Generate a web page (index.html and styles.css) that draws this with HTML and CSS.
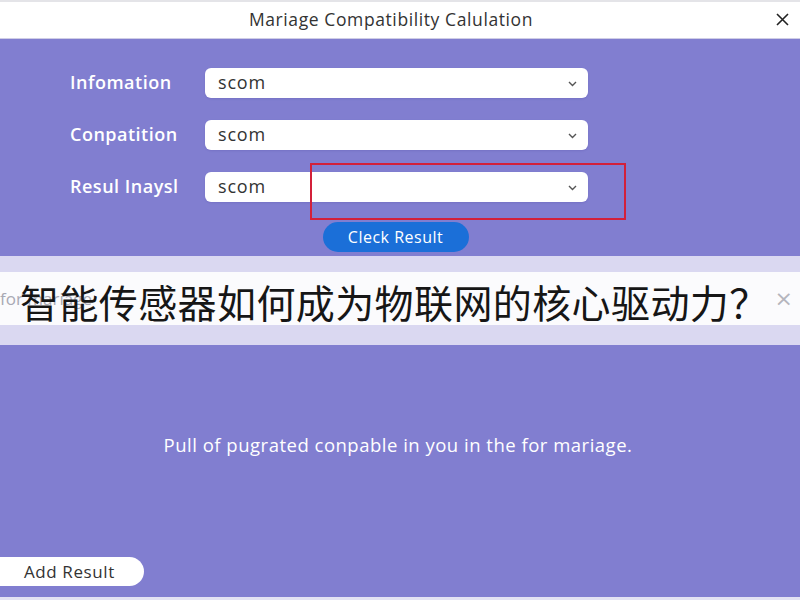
FILE: index.html
```html
<!DOCTYPE html>
<html lang="en">
<head>
    <meta charset="UTF-8">
    <meta name="viewport" content="width=device-width, initial-scale=1.0">
    <title>Mariage Compatibility Calulation</title>
    <link rel="stylesheet" href="styles.css">
</head>
<body>
    <div class="window">
        <!-- 标题栏 -->
        <div class="titlebar">
            <span class="title">Mariage Compatibility Calulation</span>
            <span class="close">
                <svg width="13" height="13" viewBox="0 0 13 13">
                    <path d="M1 1 L12 12 M12 1 L1 12" stroke="#222" stroke-width="1.6" fill="none"/>
                </svg>
            </span>
        </div>

        <div class="panel">
            <div class="form">
                <div class="row">
                    <label class="label">Infomation</label>
                    <div class="select">
                        <span>scom</span>
                        <svg class="chevron" width="9" height="6" viewBox="0 0 9 6"><path d="M1 1 L4.5 4.5 L8 1" stroke="#555" stroke-width="1.4" fill="none"/></svg>
                    </div>
                </div>
                <div class="row">
                    <label class="label">Conpatition</label>
                    <div class="select">
                        <span>scom</span>
                        <svg class="chevron" width="9" height="6" viewBox="0 0 9 6"><path d="M1 1 L4.5 4.5 L8 1" stroke="#555" stroke-width="1.4" fill="none"/></svg>
                    </div>
                </div>
                <div class="row">
                    <label class="label">Resul Inaysl</label>
                    <div class="select">
                        <span>scom</span>
                        <svg class="chevron" width="9" height="6" viewBox="0 0 9 6"><path d="M1 1 L4.5 4.5 L8 1" stroke="#555" stroke-width="1.4" fill="none"/></svg>
                    </div>
                </div>
                <!-- 高亮框 -->
                <div class="highlight"></div>
            </div>

            <div class="actions">
                <button class="btn-check">Cleck Result</button>
            </div>

            <!-- 悬浮提示条 -->
            <div class="banner">
                <div class="banner-line">
                    <span class="banner-under">for mariage</span>
                    <span class="banner-text">智能传感器如何成为物联网的核心驱动力？</span>
                    <span class="banner-close">×</span>
                </div>
            </div>

            <p class="result-text">Pull of pugrated conpable in you in the for mariage.</p>

            <div class="footer-actions">
                <button class="btn-add">Add Result</button>
            </div>
        </div>
        <div class="bottom-strip"></div>
    </div>
</body>
</html>
```

FILE: styles.css
```css
* {
    margin: 0;
    padding: 0;
    box-sizing: border-box;
}

body {
    width: 800px;
    height: 600px;
    overflow: hidden;
    font-family: 'Open Sans', 'Noto Sans', sans-serif;
    background: #fff;
}

.window {
    display: flex;
    flex-direction: column;
    height: 600px;
}

/* 标题栏 */
.titlebar {
    height: 39px;
    flex-shrink: 0;
    background: #fff;
    border-top: 2px solid #e4e4e8;
    border-bottom: 1px solid #cfcde6;
    display: flex;
    align-items: center;
    justify-content: center;
    position: relative;
}

.title {
    font-size: 17.5px;
    letter-spacing: 0.6px;
    color: #333;
    margin-left: -18px;
    margin-top: -2px;
}

.close {
    position: absolute;
    right: 11px;
    top: 11px;
    display: flex;
}

/* 主面板 */
.panel {
    flex: 1;
    background: #817ed0;
    display: flex;
    flex-direction: column;
    padding-bottom: 11px;
}

.form {
    position: relative;
    display: flex;
    flex-direction: column;
    gap: 22px;
    padding-top: 29px;
}

.row {
    display: flex;
    align-items: center;
    height: 30px;
}

.label {
    width: 205px;
    padding-left: 70px;
    font-size: 18px;
    font-weight: 600;
    color: #fff;
    letter-spacing: 0.5px;
    margin-top: -3px;
}

.select {
    width: 383px;
    height: 30px;
    background: #fff;
    border-radius: 6px;
    display: flex;
    align-items: center;
    justify-content: space-between;
    padding: 0 11px 0 13px;
    font-size: 18px;
    letter-spacing: 0.8px;
    color: #333;
    box-shadow: 0 1px 2px rgba(60, 50, 140, 0.15);
}

.select span {
    margin-top: -2px;
}

.chevron {
    margin-top: 1px;
}

.highlight {
    position: absolute;
    left: 310px;
    top: 124px;
    width: 316px;
    height: 57px;
    border: 2px solid #d3203a;
}

.actions {
    display: flex;
    justify-content: center;
    padding-right: 9px;
    margin-top: 20px;
}

.btn-check {
    width: 146px;
    height: 30px;
    border: none;
    border-radius: 15px;
    background: #1b6fd8;
    color: #fff;
    font-family: 'Open Sans', sans-serif;
    font-size: 16px;
    letter-spacing: 0.5px;
}

/* 提示条 */
.banner {
    margin-top: 4px;
    background: #dad8f1;
    padding: 16px 0 20px;
}

.banner-line {
    position: relative;
    height: 53px;
    background: #fbfbfd;
    display: flex;
    align-items: center;
    padding-left: 20px;
}

.banner-under {
    position: absolute;
    left: 0;
    top: 15px;
    font-size: 17px;
    color: #a9a9b4;
}

.banner-text {
    position: relative;
    font-family: 'Noto Sans CJK SC', sans-serif;
    font-size: 39px;
    letter-spacing: 0.4px;
    line-height: 1;
    color: #161616;
    margin-top: 6px;
}

.banner-close {
    position: absolute;
    right: 7px;
    top: 14px;
    font-size: 22px;
    color: #b5b5bd;
    font-family: 'DejaVu Sans', sans-serif;
}

.result-text {
    margin-top: 87px;
    text-align: center;
    padding-right: 4px;
    font-size: 18.5px;
    letter-spacing: 0.5px;
    line-height: 26px;
    color: #fff;
}

.footer-actions {
    margin-top: auto;
}

.btn-add {
    width: 144px;
    height: 29px;
    border: none;
    border-radius: 0 15px 15px 0;
    background: #fff;
    color: #333;
    font-family: 'Open Sans', sans-serif;
    font-size: 17px;
    letter-spacing: 0.6px;
    text-align: left;
    padding-left: 24px;
}

.bottom-strip {
    height: 3px;
    background: #e3e2f3;
}
```
